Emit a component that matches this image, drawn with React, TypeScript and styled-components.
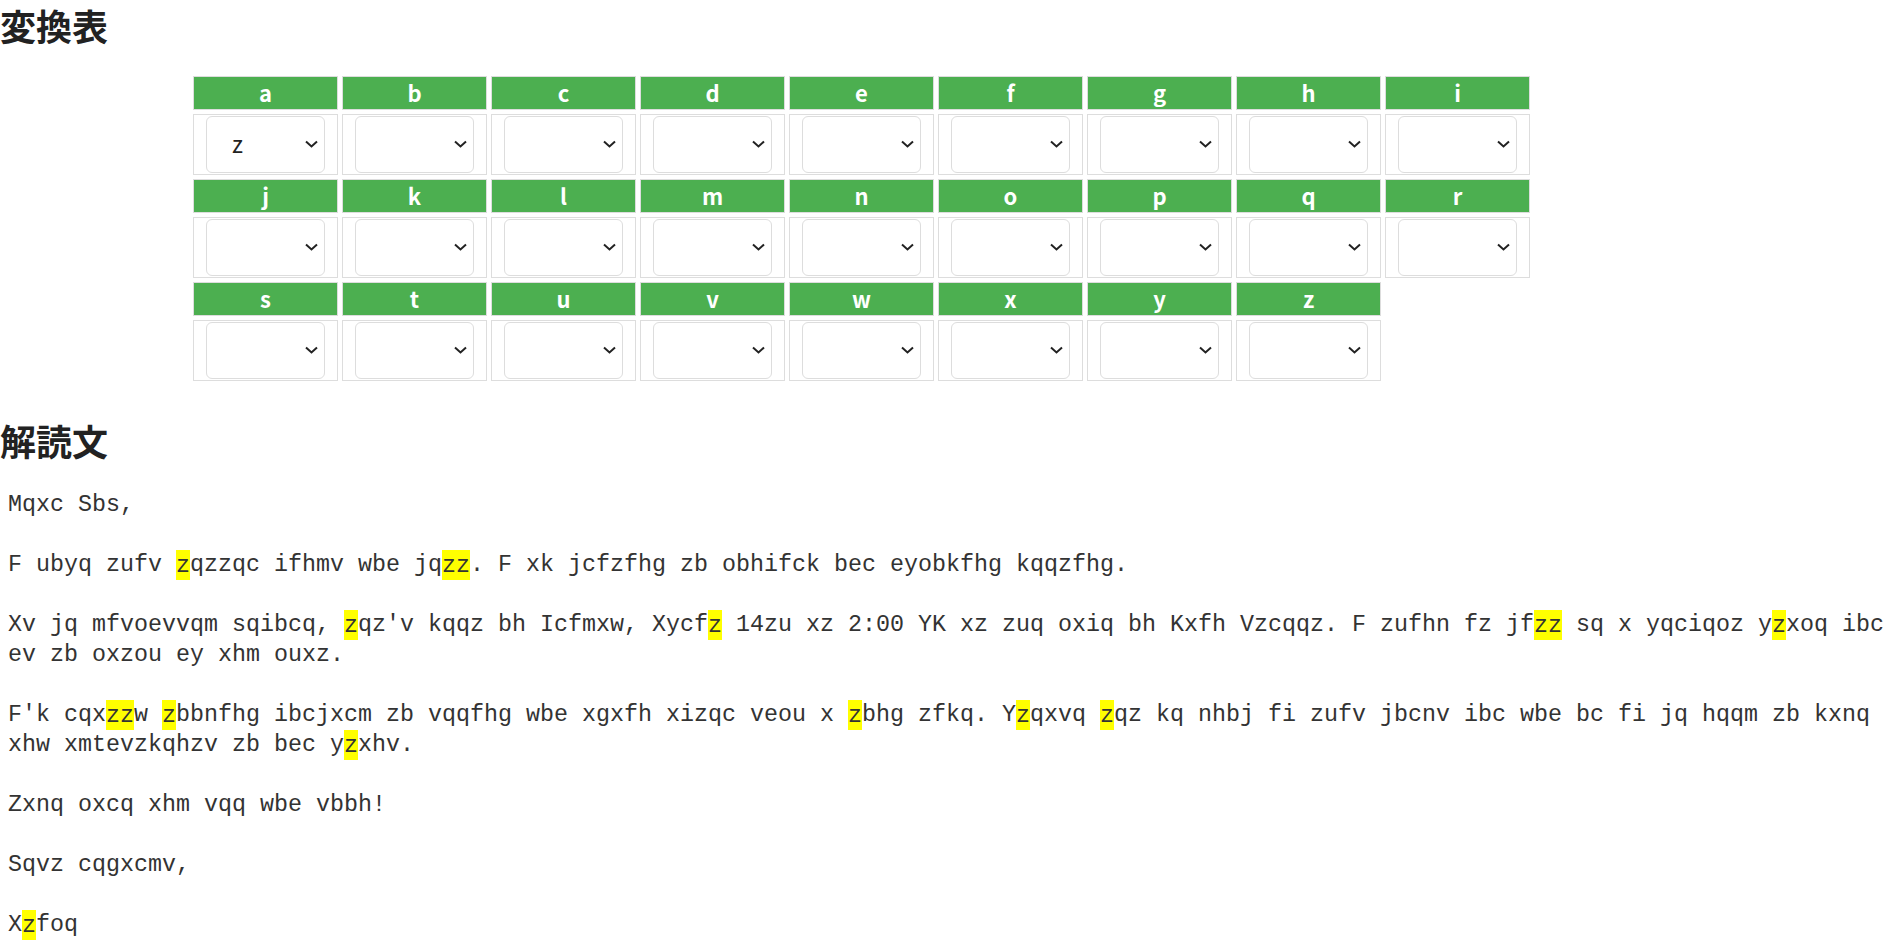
import React from "react";
import styled, { createGlobalStyle } from "styled-components";

const GlobalStyle = createGlobalStyle`
  html, body {
    margin: 0;
    padding: 0;
    background: #ffffff;
  }
  body {
    font-family: "Noto Sans CJK JP", "Noto Sans", sans-serif;
    color: #222222;
  }
`;

const Page = styled.main`
  display: flex;
  flex-direction: column;
  align-items: flex-start;
`;

const Heading = styled.h2<{ $top: number; $bottom: number }>`
  margin: ${(p) => p.$top}px 0 ${(p) => p.$bottom}px 0;
  font-family: "Noto Sans CJK JP", sans-serif;
  font-size: 36px;
  font-weight: 700;
  line-height: 51px;
  color: #222222;
`;

const Table = styled.div`
  margin-left: 193px;
  display: flex;
  flex-direction: column;
  gap: 4px;
`;

const Row = styled.div`
  display: grid;
  grid-template-columns: repeat(9, 145px);
  column-gap: 4px;
`;

const HeadCell = styled.div`
  box-sizing: border-box;
  height: 34px;
  padding-bottom: 2px;
  border: 1px solid #dddddd;
  background: #4caf50;
  color: #ffffff;
  font-family: "Noto Sans CJK JP", "Noto Sans", sans-serif;
  font-weight: 700;
  font-size: 22px;
  line-height: 30px;
  display: flex;
  align-items: center;
  justify-content: center;
`;

const BodyCell = styled.div`
  box-sizing: border-box;
  height: 61px;
  border: 1px solid #dddddd;
  display: flex;
  align-items: center;
  justify-content: center;
`;

const SelectWrap = styled.div`
  position: relative;
  width: 119px;
  height: 57px;
`;

const Select = styled.select`
  appearance: none;
  -webkit-appearance: none;
  box-sizing: border-box;
  width: 100%;
  height: 100%;
  margin: 0;
  padding: 0 28px 4px 25px;
  border: 1px solid #dddddd;
  border-radius: 6px;
  background: #ffffff;
  color: #222222;
  font-family: "Noto Sans CJK JP", "Noto Sans", sans-serif;
  font-size: 23px;
  font-weight: 400;
  outline: none;
`;

const Chevron = styled.svg`
  position: absolute;
  right: 7px;
  top: 50%;
  width: 13px;
  height: 8px;
  margin-top: -5px;
  pointer-events: none;
`;

const Decoded = styled.div`
  box-sizing: border-box;
  width: 100%;
  margin: 0;
  padding: 0 0 0 8px;
  white-space: pre-wrap;
  font-family: "Liberation Mono", monospace;
  font-size: 23.33px;
  line-height: 30px;
  color: #333333;
`;

const Mark = styled.span`
  background: #ffff00;
  padding: 2.5px 0 2px;
`;

const letters = "abcdefghijklmnopqrstuvwxyz".split("");
const chunks: string[][] = [letters.slice(0, 9), letters.slice(9, 18), letters.slice(18)];
const mapping: Record<string, string> = { a: "z" };

const TEXT = `Mqxc Sbs,

F ubyq zufv [z]qzzqc ifhmv wbe jq[zz]. F xk jcfzfhg zb obhifck bec eyobkfhg kqqzfhg.

Xv jq mfvoevvqm sqibcq, [z]qz'v kqqz bh Icfmxw, Xycf[z] 14zu xz 2:00 YK xz zuq oxiq bh Kxfh Vzcqqz. F zufhn fz jf[zz] sq x yqciqoz y[z]xoq ibc ev zb oxzou ey xhm ouxz.

F'k cqx[zz]w [z]bbnfhg ibcjxcm zb vqqfhg wbe xgxfh xizqc veou x [z]bhg zfkq. Y[z]qxvq [z]qz kq nhbj fi zufv jbcnv ibc wbe bc fi jq hqqm zb kxnq xhw xmtevzkqhzv zb bec y[z]xhv.

Zxnq oxcq xhm vqq wbe vbbh!

Sqvz cqgxcmv,

X[z]foq`;

const segments = TEXT.split(/\[(z+)\]/);

function LetterSelect({ letter }: { letter: string }) {
  return (
    <SelectWrap>
      <Select defaultValue={mapping[letter] ?? ""} aria-label={letter}>
        <option value=""></option>
        {letters.map((l) => (
          <option key={l} value={l}>
            {l}
          </option>
        ))}
      </Select>
      <Chevron viewBox="0 0 13 8" aria-hidden="true">
        <polyline points="1,1.5 6.5,6.5 12,1.5" fill="none" stroke="#222" strokeWidth="2" />
      </Chevron>
    </SelectWrap>
  );
}

export default function App() {
  return (
    <>
      <GlobalStyle />
      <Page>
        <Heading $top={0} $bottom={25}>変換表</Heading>
        <Table>
          {chunks.map((chunk, i) => (
            <React.Fragment key={i}>
              <Row>
                {chunk.map((l) => (
                  <HeadCell key={l}>{l}</HeadCell>
                ))}
              </Row>
              <Row>
                {chunk.map((l) => (
                  <BodyCell key={l}>
                    <LetterSelect letter={l} />
                  </BodyCell>
                ))}
              </Row>
            </React.Fragment>
          ))}
        </Table>
        <Heading $top={34} $bottom={24}>解読文</Heading>
        <Decoded>
          {segments.map((s, i) => (i % 2 === 1 ? <Mark key={i}>{s}</Mark> : <React.Fragment key={i}>{s}</React.Fragment>))}
        </Decoded>
      </Page>
    </>
  );
}
